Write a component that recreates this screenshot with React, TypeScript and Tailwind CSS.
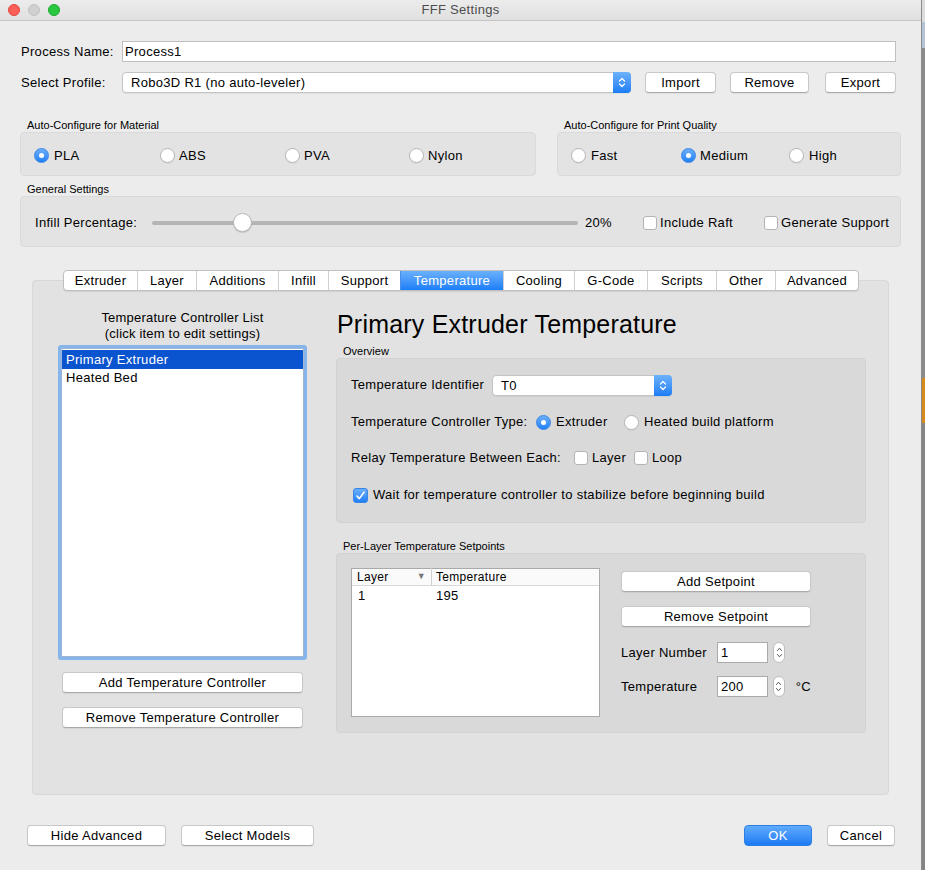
import type { ReactNode } from 'react';

function Btn({ children, className = '' }: { children: ReactNode; className?: string }) {
  return (
    <div
      className={`h-[21px] flex items-center justify-center bg-white border border-[#c8c8c8] border-b-[#a9a9a9] rounded-[4px] shadow-[0_1px_1px_rgba(0,0,0,0.06)] text-[13px] text-black ${className}`}
    >
      {children}
    </div>
  );
}

function Radio({ on = false }: { on?: boolean }) {
  return on ? (
    <span className="w-[15px] h-[15px] shrink-0 rounded-full bg-linear-to-b from-[#6aaefb] to-[#1d80f6] border border-[#3a86e8] flex items-center justify-center">
      <span className="w-[5px] h-[5px] rounded-full bg-white" />
    </span>
  ) : (
    <span className="w-[15px] h-[15px] shrink-0 rounded-full bg-white border border-[#b4b4b4] shadow-[0_1px_0_rgba(0,0,0,0.04)]" />
  );
}

function Check({ on = false }: { on?: boolean }) {
  return on ? (
    <span className="w-[15px] h-[15px] shrink-0 rounded-[3px] bg-linear-to-b from-[#6aaefb] to-[#1d80f6] border border-[#3a86e8] flex items-center justify-center">
      <svg width="11" height="11" viewBox="0 0 11 11">
        <path d="M2 6L4.3 8.6L9 2.2" stroke="white" strokeWidth="1.6" fill="none" strokeLinecap="round" strokeLinejoin="round" />
      </svg>
    </span>
  ) : (
    <span className="w-[14px] h-[14px] shrink-0 rounded-[3px] bg-white border border-[#b4b4b4]" />
  );
}

function Arrows({ color }: { color: string }) {
  return (
    <svg width="8" height="13" viewBox="0 0 8 13">
      <path d="M1.5 5L4 2.5L6.5 5M1.5 8L4 10.5L6.5 8" stroke={color} strokeWidth="1.2" fill="none" strokeLinecap="round" strokeLinejoin="round" />
    </svg>
  );
}

function PopUp({ value, className = '' }: { value: string; className?: string }) {
  return (
    <div className={`h-[21px] flex bg-white border border-[#c4c4c4] rounded-[4px] shadow-[0_1px_1px_rgba(0,0,0,0.06)] ${className}`}>
      <span className="flex-1 pl-[8px] text-[13px] leading-[19px] text-black">{value}</span>
      <span className="w-[18px] -my-px -mr-px rounded-r-[4px] bg-linear-to-b from-[#6cb2fb] to-[#1a7cf5] flex items-center justify-center">
        <Arrows color="white" />
      </span>
    </div>
  );
}

function Stepper() {
  return (
    <span className="w-[12px] h-[21px] rounded-[6px] bg-white border border-[#bdbdbd] flex items-center justify-center">
      <svg width="7" height="15" viewBox="0 0 7 15">
        <path d="M1.5 5.5L3.5 3.2L5.5 5.5M1.5 9.5L3.5 11.8L5.5 9.5" stroke="#555" strokeWidth="1" fill="none" strokeLinecap="round" />
      </svg>
    </span>
  );
}

function GroupLabel({ children, className = '' }: { children: ReactNode; className?: string }) {
  return <div className={`h-[14px] leading-[14px] text-[11px] tracking-normal text-black pl-[7px] ${className}`}>{children}</div>;
}

const tabs: [string, string][] = [
  ['Extruder', 'w-[73px]'],
  ['Layer', 'w-[59px]'],
  ['Additions', 'w-[82px]'],
  ['Infill', 'w-[50px]'],
  ['Support', 'w-[72px]'],
  ['Temperature', 'w-[103px]'],
  ['Cooling', 'w-[71px]'],
  ['G-Code', 'w-[73px]'],
  ['Scripts', 'w-[69px]'],
  ['Other', 'w-[59px]'],
  ['Advanced', 'w-[83px]'],
];

export default function App() {
  return (
    <div className="flex w-[925px] h-[870px] font-['Liberation_Sans',Arial,sans-serif] text-[13px] tracking-[0.3px] text-black">
      <div className="w-[921px] h-full bg-[#ececec] flex flex-col">
        {/* title bar */}
        <div className="h-[21px] shrink-0 relative flex items-center justify-center bg-linear-to-b from-[#ececec] to-[#e0e0e0] border-b border-[#c4c4c4]">
          <div className="absolute left-[8px] top-[4px] flex gap-[8px]">
            <span className="w-[12px] h-[12px] rounded-full bg-[#fc5f57] border border-[#e2463f]" />
            <span className="w-[12px] h-[12px] rounded-full bg-[#d0d0d0] border border-[#c2c2c2]" />
            <span className="w-[12px] h-[12px] rounded-full bg-[#29c840] border border-[#1ca830]" />
          </div>
          <span className="text-[13px] text-[#4d4d4d]">FFF Settings</span>
        </div>

        <div className="flex-1 flex flex-col px-[20px]">
          {/* process name */}
          <div className="mt-[20px] mr-[5px] h-[21px] flex items-center">
            <span className="w-[102px] pl-[1px]">Process Name:</span>
            <div className="flex-1 h-[21px] bg-white border border-[#bfbfbf] pl-[2px] leading-[19px]">Process1</div>
          </div>
          <div className="mt-[10px] h-[21px] flex items-center">
            <span className="w-[102px] pl-[1px]">Select Profile:</span>
            <PopUp value="Robo3D R1 (no auto-leveler)" className="w-[509px]" />
            <Btn className="ml-[14px] w-[71px]">Import</Btn>
            <Btn className="ml-[14px] w-[79px]">Remove</Btn>
            <Btn className="ml-[16px] w-[71px]">Export</Btn>
          </div>

          {/* auto configure */}
          <div className="mt-[25px] flex">
            <div className="w-[516px]">
              <GroupLabel>Auto-Configure for Material</GroupLabel>
              <div className="h-[44px] rounded-[4px] bg-[#e3e3e3] border border-[#dadada] flex items-center pl-[13px] pt-[3px]">
                <label className="w-[126px] flex items-center gap-[5px]"><Radio on />PLA</label>
                <label className="w-[125px] flex items-center gap-[4px]"><Radio />ABS</label>
                <label className="w-[124px] flex items-center gap-[4px]"><Radio />PVA</label>
                <label className="flex items-center gap-[4px]"><Radio />Nylon</label>
              </div>
            </div>
            <div className="ml-[21px] w-[344px]">
              <GroupLabel>Auto-Configure for Print Quality</GroupLabel>
              <div className="h-[44px] rounded-[4px] bg-[#e3e3e3] border border-[#dadada] flex items-center pl-[13px] pt-[3px]">
                <label className="w-[110px] flex items-center gap-[5px]"><Radio />Fast</label>
                <label className="w-[108px] flex items-center gap-[4px]"><Radio on />Medium</label>
                <label className="flex items-center gap-[5px]"><Radio />High</label>
              </div>
            </div>
          </div>

          {/* general settings */}
          <GroupLabel className="mt-[6px]">General Settings</GroupLabel>
          <div className="h-[51px] rounded-[4px] bg-[#e3e3e3] border border-[#dadada] flex items-center pl-[14px] pt-[2px]">
            <span className="w-[117px]">Infill Percentage:</span>
            <div className="w-[426px] h-[4px] rounded-full bg-[#b5b5b5] relative">
              <span className="absolute left-[81px] -top-[8px] w-[19px] h-[19px] rounded-full bg-white border border-[#b8b8b8] shadow-[0_1px_1px_rgba(0,0,0,0.15)]" />
            </div>
            <span className="ml-[7px] w-[58px]">20%</span>
            <label className="w-[121px] flex items-center gap-[3px]"><Check />Include Raft</label>
            <label className="flex items-center gap-[3px]"><Check />Generate Support</label>
          </div>

          {/* tab bar */}
          <div className="mt-[23px] pl-[43px] relative z-10 flex">
            <div className="flex h-[21px] bg-white border border-[#bfbfbf] rounded-[4px] shadow-[0_1px_1px_rgba(0,0,0,0.08)] overflow-hidden">
              {tabs.map(([name, w], i) => (
                <div
                  key={name}
                  className={`${w} flex items-center justify-center ${i > 0 ? 'border-l border-[#d0d0d0]' : ''} ${
                    name === 'Temperature' ? 'bg-linear-to-b from-[#69b0fb] to-[#1a7ef7] text-white border-l-[#4a90e8]' : ''
                  }`}
                >
                  {name}
                </div>
              ))}
            </div>
          </div>

          {/* tab pane */}
          <div className="-mt-[11px] mx-[12px] h-[515px] rounded-[4px] bg-[#e2e2e2] border border-[#d8d8d8] flex">
            {/* left column */}
            <div className="ml-[25px] w-[249px] pt-[29px] flex flex-col">
              <div className="text-center leading-[16px] tracking-[0.2px]">
                Temperature Controller List
                <br />
                (click item to edit settings)
              </div>
              <div className="mt-[3px] h-[315px] rounded-[3px] border-[3px] border-[#86b5ec] bg-white">
                <div className="h-full border border-[#9fb6d2] pt-px">
                  <div className="h-[19px] bg-[#0b54cf] text-white pl-[4px] leading-[19px]">Primary Extruder</div>
                  <div className="h-[18px] pl-[4px] leading-[18px]">Heated Bed</div>
                </div>
              </div>
              <Btn className="mt-[12px] mx-[4px] h-[20px]">Add Temperature Controller</Btn>
              <Btn className="mt-[14px] mx-[4px] h-[20px]">Remove Temperature Controller</Btn>
            </div>

            {/* right column */}
            <div className="ml-[29px] w-[530px] pt-[29px] flex flex-col">
              <div className="pl-[1px] text-[25px] leading-[28px] tracking-[0.2px]">Primary Extruder Temperature</div>
              <GroupLabel className="mt-[6px]">Overview</GroupLabel>
              <div className="h-[165px] rounded-[4px] bg-[#d9d9d9] border border-[#d2d2d2] pl-[14px] pt-[16px]">
                <div className="h-[20px] flex items-center">
                  <span className="w-[141px]">Temperature Identifier</span>
                  <PopUp value="T0" className="w-[180px] h-[20px]" />
                </div>
                <div className="mt-[17px] h-[20px] flex items-center">
                  <span className="w-[185px]">Temperature Controller Type:</span>
                  <label className="w-[88px] flex items-center gap-[5px]"><Radio on />Extruder</label>
                  <label className="flex items-center gap-[5px]"><Radio />Heated build platform</label>
                </div>
                <div className="mt-[16px] h-[20px] flex items-center">
                  <span className="w-[223px]">Relay Temperature Between Each:</span>
                  <label className="w-[60px] flex items-center gap-[4px]"><Check />Layer</label>
                  <label className="flex items-center gap-[4px]"><Check />Loop</label>
                </div>
                <div className="mt-[17px] h-[20px] flex items-center gap-[5px] pl-[2px]">
                  <Check on />
                  Wait for temperature controller to stabilize before beginning build
                </div>
              </div>

              <GroupLabel className="mt-[16px]">Per-Layer Temperature Setpoints</GroupLabel>
              <div className="h-[180px] rounded-[4px] bg-[#d9d9d9] border border-[#d2d2d2] pl-[14px] pt-[14px] flex">
                <div className="w-[249px] h-[149px] bg-white border border-[#aaaaaa] flex flex-col">
                  <div className="h-[17px] flex items-center border-b border-[#d9d9d9] bg-[#fafafa] text-[12px]">
                    <span className="w-[80px] pl-[5px] flex items-center justify-between pr-[5px] border-r border-[#d0d0d0]">
                      Layer
                      <span className="text-[9px] text-[#777]">▼</span>
                    </span>
                    <span className="pl-[4px]">Temperature</span>
                  </div>
                  <div className="h-[20px] flex items-center">
                    <span className="w-[84px] pl-[6px]">1</span>
                    <span>195</span>
                  </div>
                </div>
                <div className="ml-[21px] w-[190px] flex flex-col">
                  <Btn className="mt-[3px] h-[20px]">Add Setpoint</Btn>
                  <Btn className="mt-[14px] h-[20px]">Remove Setpoint</Btn>
                  <div className="mt-[15px] h-[21px] flex items-center">
                    <span className="w-[96px]">Layer Number</span>
                    <div className="w-[51px] h-[21px] bg-white border border-[#aaaaaa] pl-[3px] leading-[19px]">1</div>
                    <span className="ml-[5px]"><Stepper /></span>
                  </div>
                  <div className="mt-[13px] h-[21px] flex items-center">
                    <span className="w-[96px]">Temperature</span>
                    <div className="w-[51px] h-[21px] bg-white border border-[#aaaaaa] pl-[3px] leading-[19px]">200</div>
                    <span className="ml-[5px]"><Stepper /></span>
                    <span className="ml-[11px]">°C</span>
                  </div>
                </div>
              </div>
            </div>
          </div>

          {/* bottom buttons */}
          <div className="mt-[30px] flex items-center">
            <Btn className="ml-[7px] w-[139px]">Hide Advanced</Btn>
            <Btn className="ml-[15px] w-[133px]">Select Models</Btn>
            <div className="flex-1" />
            <div className="w-[68px] h-[21px] flex items-center justify-center rounded-[4px] bg-linear-to-b from-[#5fabfc] to-[#1a7af5] border border-[#2e7fe4] text-white text-[13px]">
              OK
            </div>
            <Btn className="ml-[15px] mr-[6px] w-[68px]">Cancel</Btn>
          </div>
        </div>
      </div>

      {/* desktop behind the window */}
      <div className="flex-1 flex flex-col border-l border-[#8a8a8a]">
        <div className="h-[22px] bg-[#dcdcdc]" />
        <div className="h-[26px] bg-[#b4c4d4]" />
        <div className="h-[330px] bg-[#8b8b8b]" />
        <div className="h-[45px] bg-[#d68a1a]" />
        <div className="flex-1 bg-[#858585]" />
      </div>
    </div>
  );
}
